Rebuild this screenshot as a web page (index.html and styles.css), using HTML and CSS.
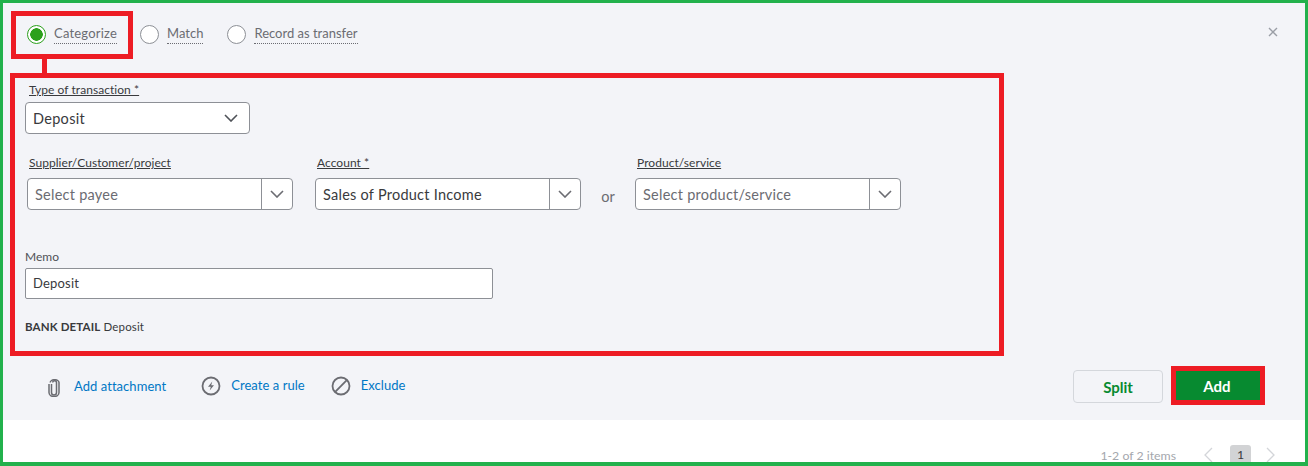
FILE: index.html
```html
<!DOCTYPE html>
<html lang="en">
<head>
<meta charset="utf-8">
<title>Categorize transaction</title>
<link rel="stylesheet" href="styles.css">
</head>
<body>
<div class="frame">
  <section class="panel">
    <div class="radios">
      <label class="radio radio-cat"><span class="dot on"></span><span class="radio-text">Categorize</span></label>
      <label class="radio radio-match"><span class="dot"></span><span class="radio-text">Match</span></label>
      <label class="radio"><span class="dot"></span><span class="radio-text">Record as transfer</span></label>
      <svg class="close" viewBox="0 0 10 10" width="10" height="10"><path d="M1 1l8 8M9 1l-8 8" stroke="#9a9ea6" stroke-width="1.4" fill="none"/></svg>
    </div>
    <div class="form">
      <div class="field-type">
        <div class="lbl lbl-type">Type of transaction *</div>
        <div class="select">
          <span>Deposit</span>
          <svg class="chev" viewBox="0 0 14 8" width="14" height="8"><path d="M1 1l6 6 6-6" stroke="#4f5258" stroke-width="1.6" fill="none"/></svg>
        </div>
      </div>
      <div class="row">
        <div class="col">
          <div class="lbl">Supplier/Customer/project</div>
          <div class="combo"><span class="val ph">Select payee</span><span class="arrow"><svg class="chev" viewBox="0 0 14 8" width="14" height="8"><path d="M1 1l6 6 6-6" stroke="#6b6c72" stroke-width="1.6" fill="none"/></svg></span></div>
        </div>
        <div class="col col-account">
          <div class="lbl">Account *</div>
          <div class="combo"><span class="val">Sales of Product Income</span><span class="arrow"><svg class="chev" viewBox="0 0 14 8" width="14" height="8"><path d="M1 1l6 6 6-6" stroke="#6b6c72" stroke-width="1.6" fill="none"/></svg></span></div>
        </div>
        <div class="or">or</div>
        <div class="col">
          <div class="lbl">Product/service</div>
          <div class="combo"><span class="val ph">Select product/service</span><span class="arrow"><svg class="chev" viewBox="0 0 14 8" width="14" height="8"><path d="M1 1l6 6 6-6" stroke="#6b6c72" stroke-width="1.6" fill="none"/></svg></span></div>
        </div>
      </div>
      <div class="lbl-memo">Memo</div>
      <div class="memo">Deposit</div>
      <div class="bank"><b>BANK DETAIL</b> Deposit</div>
    </div>
    <div class="footer">
      <div class="links">
        <svg class="ico-clip" viewBox="0 0 12 18" width="12" height="18"><path d="M3.5 5v8.5a2.5 2.5 0 0 0 5 0V3.600a1.900 1.900 0 0 0-3.800 0" fill="none" stroke="#6b6c72" stroke-width="1.500"/><path d="M1 5v8.500a5 4 0 0 0 10 0V3.600a4.400 2.900 0 0 0-8.800 0" fill="none" stroke="#6b6c72" stroke-width="1.500"/></svg>
        <a class="link link-attach">Add attachment</a>
        <svg class="ico" viewBox="0 0 20 20" width="20" height="20"><circle cx="10" cy="10" r="8.500" fill="none" stroke="#6b6c72" stroke-width="1.800"/><path d="M11.300 5.500L7 10.800h2.800L8.700 14.500l4.300-5.300h-2.800z" fill="#6b6c72"/></svg>
        <a class="link link-rule">Create a rule</a>
        <svg class="ico" viewBox="0 0 20 20" width="20" height="20"><circle cx="10" cy="10" r="8.500" fill="none" stroke="#6b6c72" stroke-width="1.800"/><path d="M4.200 15.800L15.800 4.200" stroke="#6b6c72" stroke-width="1.800"/></svg>
        <a class="link link-excl">Exclude</a>
      </div>
      <div class="buttons">
        <button class="btn split">Split</button>
        <button class="btn add">Add</button>
      </div>
    </div>
  </section>
  <div class="pager">
    <span class="count">1-2 of 2 items</span>
    <svg class="pg" viewBox="0 0 10 16" width="10" height="16"><path d="M9 1L2 8l7 7" stroke="#d3d5d9" stroke-width="1.300" fill="none"/></svg>
    <span class="page">1</span>
    <svg class="pg" viewBox="0 0 10 16" width="10" height="16"><path d="M1 1l7 7-7 7" stroke="#d3d5d9" stroke-width="1.300" fill="none"/></svg>
  </div>
  <div class="mark mark-radio"></div>
  <div class="mark-line"></div>
  <div class="mark mark-form"></div>
  <div class="mark mark-add"></div>
</div>
</body>
</html>
```
FILE: styles.css
```css
* { box-sizing: border-box; }
html, body { margin: 0; padding: 0; }
body { background: #fff; font-family: "Lato", "Open Sans", sans-serif; color: #393a3d; }
.frame { position: relative; width: 1308px; height: 466px; border: 3px solid #22b14c; border-bottom-width: 4px; overflow: hidden; background: #fff; }
.panel { height: 417px; background: #f3f4f8; display: flex; flex-direction: column; }

.radios { display: flex; align-items: center; height: 60px; padding: 2px 0 0 24px; position: relative; }
.radio { display: flex; align-items: center; gap: 8px; color: #6b6c72; font-size: 13px; }
.radio-cat { margin-right: 23px; letter-spacing: .2px; }
.radio-match { margin-right: 24px; }
.radio-text { border-bottom: 1px dotted #6b6c72; line-height: 16px; padding-bottom: 2px; }
.dot { width: 19px; height: 19px; border-radius: 50%; border: 1px solid #8d9096; background: #fff; display: block; }
.dot.on { border-color: #2ca01c; background: radial-gradient(circle, #2ca01c 0 6px, #fff 6.500px); }
.close { margin-left: auto; margin-right: 27px; margin-top: -4px; }

.form { padding: 20px 0 0 22px; height: 293px; display: flex; flex-direction: column; }
.lbl { font-size: 12px; line-height: 14px; color: #393a3d; text-decoration: underline; letter-spacing: .05px; }
.field-type { margin-bottom: 22px; }
.lbl-type { margin: 0 0 5px 4px; }
.select { width: 225px; height: 32px; background: #fff; border: 1px solid #8d9096; border-radius: 4px; display: flex; align-items: center; justify-content: space-between; padding: 0 11px 0 7px; font-size: 14.500px; letter-spacing: .3px; }
.row { display: flex; align-items: flex-start; padding-left: 2px; }
.col { width: 266px; }
.col-account { margin-left: 22px; }
.col .lbl { margin: 0 0 8px 2px; }
.combo { height: 32px; background: #fff; border: 1px solid #8d9096; border-radius: 4px; display: flex; font-size: 14.500px; letter-spacing: .25px; }
.val { flex: 1; padding-left: 7px; line-height: 31px; }
.ph { color: #6b6c72; }
.arrow { width: 31px; border-left: 1px solid #8d9096; display: flex; align-items: center; justify-content: center; }
.or { width: 54px; padding-top: 32px; text-align: center; font-size: 14.500px; color: #6b6c72; }
.lbl-memo { font-size: 12px; line-height: 14px; color: #4f5156; margin-top: 40px; margin-bottom: 4px; }
.memo { width: 468px; height: 31px; background: #fff; border: 1px solid #8d9096; border-radius: 2px; padding-left: 7px; line-height: 29px; font-size: 13px; letter-spacing: .2px; }
.bank { margin-top: 21px; font-size: 11.500px; line-height: 14px; letter-spacing: .15px; }
.bank b { font-weight: 700; }

.footer { flex: 1; display: flex; justify-content: space-between; padding: 0 45px 0 45px; align-items: flex-start; }
.links { display: flex; align-items: center; height: 20px; margin-top: 20px; }
.ico-clip { margin-top: 3px; }
.link { font-size: 13px; color: #0077c5; letter-spacing: .05px; }
.link-attach { margin-left: 14px; margin-right: 35px; }
.ico + .link { margin-left: 10px; margin-top: -2px; }
.link-rule { margin-right: 26px; }
.buttons { display: flex; gap: 13px; margin-top: 14px; }
.btn { font-family: inherit; font-size: 15px; font-weight: 700; border-radius: 4px; height: 33px; padding: 0; }
.split { width: 90px; border: 1px solid #d4d7dc; background: #f3f4f8; color: #078a30; }
.add { width: 84px; height: 29px; margin-top: 1px; padding-right: 2px; border: 0; border-radius: 0; background: #078a30; color: #fff; }

.pager { display: flex; align-items: center; justify-content: flex-end; height: 42px; padding: 28px 29px 0 0; font-size: 12.300px; color: #a4a7ad; }
.count { margin-right: 27px; }
.page { width: 21px; height: 20px; background: #d2d3d5; border-radius: 3px; color: #393a3d; text-align: center; line-height: 20px; margin: 0 15px 0 17px; font-weight: 400; }

.mark { position: absolute; border: 5px solid #ed1c24; }
.mark-radio { left: 8px; top: 8px; width: 122px; height: 48px; }
.mark-line { position: absolute; left: 39px; top: 56px; width: 5px; height: 14px; background: #ed1c24; }
.mark-form { left: 7px; top: 70px; width: 994px; height: 283px; }
.mark-add { left: 1168px; top: 363px; width: 94px; height: 39px; }
```
